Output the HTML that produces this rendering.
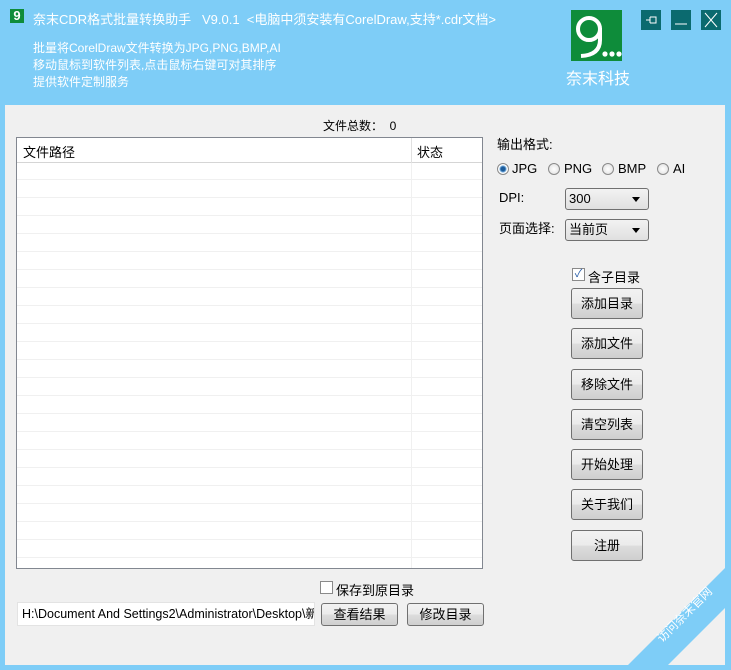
<!DOCTYPE html>
<html><head><meta charset="utf-8"><style>
*{margin:0;padding:0;box-sizing:border-box}
body{width:731px;height:670px;background:#7ecdf7;position:relative;overflow:hidden;font-family:"Liberation Sans","Noto Sans CJK SC",sans-serif;font-size:12px;color:#000}
.a{position:absolute}
.w{color:#fff;white-space:nowrap}
.panel{left:5px;top:105px;width:720px;height:560px;background:#f0f0f0}
.tb{width:20px;height:20px;background:#0b6a6f;top:10px}
.btn{position:absolute;left:571px;width:72px;height:31px;border:1px solid #707070;border-radius:3px;background:linear-gradient(#f2f2f2,#ebebeb 50%,#dddddd 51%,#cfcfcf);text-align:center;line-height:29px;font-size:13px}
.radio{position:absolute;width:12px;height:12px;border:1px solid #8a8a8a;border-radius:50%;background:radial-gradient(#fff,#ddd)}
.sel{position:absolute;left:565px;width:84px;height:22px;border:1px solid #707070;border-radius:3px;background:linear-gradient(#f2f2f2,#e0e0e0);font-size:13px;line-height:20px;padding-left:3px}
.sel:after{content:"";position:absolute;right:8px;top:8px;border-left:4px solid transparent;border-right:4px solid transparent;border-top:5px solid #000}
.chk{position:absolute;width:13px;height:13px;border:1px solid #8a8a8a;background:#fff}
</style></head><body>
<div class="a" style="left:10px;top:9px;width:14px;height:14px;background:#0e8c3a;color:#fff;font-size:13px;line-height:14px;text-align:center;font-weight:bold">9</div>
<div class="a w" style="left:33px;top:9px;font-size:13px">奈末CDR格式批量转换助手 &nbsp; V9.0.1 &nbsp;&lt;电脑中须安装有CorelDraw,支持*.cdr文档&gt;</div>
<div class="a w" style="left:33px;top:40px;line-height:17px;font-size:12px">批量将CorelDraw文件转换为JPG,PNG,BMP,AI<br>移动鼠标到软件列表,点击鼠标右键可对其排序<br>提供软件定制服务</div>
<div class="a" style="left:571px;top:10px;width:51px;height:51px;background:#0e8c3a;overflow:hidden">
<svg width="51" height="51"><circle cx="18" cy="19" r="11" stroke="#fff" stroke-width="4" fill="none"/><path d="M29 18V30Q29 45 10 46" stroke="#fff" stroke-width="4" fill="none"/><circle cx="34" cy="44" r="2.6" fill="#fff"/><circle cx="41" cy="44" r="2.6" fill="#fff"/><circle cx="48" cy="44" r="2.6" fill="#fff"/></svg></div>
<div class="a w" style="left:566px;top:65px;font-size:16px">奈末科技</div>
<div class="a tb" style="left:641px"><svg width="20" height="20"><path d="M5 10H9M9 7V13M9 7H15V13H9" stroke="#fff" fill="none"/></svg></div>
<div class="a tb" style="left:671px"><svg width="20" height="20"><path d="M4 14H16" stroke="#fff"/></svg></div>
<div class="a tb" style="left:701px"><svg width="20" height="20"><path d="M4 3L16 17M16 3L4 17" stroke="#fff"/></svg></div>
<div class="a panel"></div>
<div class="a" style="left:323px;top:117px;font-size:12px">文件总数： &nbsp;0</div>
<div class="a" style="left:16px;top:137px;width:467px;height:432px;border:1px solid #828790;background:#fff;
background-image:repeating-linear-gradient(to bottom,transparent 0,transparent 17px,#f0f0f0 17px,#f0f0f0 18px);background-position:0 24px;background-size:100% 100%">
<div class="a" style="left:0;top:0;width:465px;height:25px;background:#fff;border-bottom:1px solid #d5d5d5"></div>
<div class="a" style="left:394px;top:0;width:1px;height:430px;background:#f0f0f0"></div>
<div class="a" style="left:394px;top:0;width:1px;height:25px;background:#e0e0e0"></div>
<div class="a" style="left:6px;top:4px;font-size:13px">文件路径</div>
<div class="a" style="left:400px;top:4px;font-size:13px">状态</div>
</div>
<div class="a" style="left:497px;top:134px;font-size:13px">输出格式:</div>
<div class="radio" style="left:497px;top:163px;background:radial-gradient(#1d5c9a 2px,#6aa4d8 3px,#fff 4px)"></div><div class="a" style="left:512px;top:161px;font-size:13px">JPG</div>
<div class="radio" style="left:548px;top:163px"></div><div class="a" style="left:564px;top:161px;font-size:13px">PNG</div>
<div class="radio" style="left:602px;top:163px"></div><div class="a" style="left:618px;top:161px;font-size:13px">BMP</div>
<div class="radio" style="left:657px;top:163px"></div><div class="a" style="left:673px;top:161px;font-size:13px">AI</div>
<div class="a" style="left:499px;top:190px;font-size:13px">DPI:</div>
<div class="sel" style="top:188px">300</div>
<div class="a" style="left:499px;top:218px;font-size:13px">页面选择:</div>
<div class="sel" style="top:219px">当前页</div>
<div class="chk" style="left:572px;top:268px;font-size:11px;line-height:11px;color:#2a5ea8;text-align:center">✓</div>
<div class="a" style="left:588px;top:267px;font-size:13px">含子目录</div>
<div class="btn" style="top:288px">添加目录</div>
<div class="btn" style="top:328px">添加文件</div>
<div class="btn" style="top:369px">移除文件</div>
<div class="btn" style="top:409px">清空列表</div>
<div class="btn" style="top:449px">开始处理</div>
<div class="btn" style="top:489px">关于我们</div>
<div class="btn" style="top:530px">注册</div>
<div class="chk" style="left:320px;top:581px"></div>
<div class="a" style="left:336px;top:580px;font-size:13px">保存到原目录</div>
<div class="a" style="left:17px;top:602px;width:298px;height:24px;background:#fff;border:1px solid #e3e3e3;font-family:'Liberation Sans',sans-serif;font-size:12.5px;line-height:22px;padding-left:4px;overflow:hidden;white-space:nowrap">H:\Document And Settings2\Administrator\Desktop\新</div>
<div class="btn" style="left:321px;top:603px;width:77px;height:23px;line-height:21px">查看结果</div>
<div class="btn" style="left:407px;top:603px;width:77px;height:23px;line-height:21px">修改目录</div>
<svg class="a" style="left:0;top:0" width="731" height="670"><polygon points="628,665 727,566 727,606 668,665" fill="#7ecdf7"/>
<text x="0" y="0" transform="translate(662,643) rotate(-45)" font-family="Noto Sans CJK SC" font-size="12" fill="#fff">访问奈末官网</text></svg>
</body></html>
